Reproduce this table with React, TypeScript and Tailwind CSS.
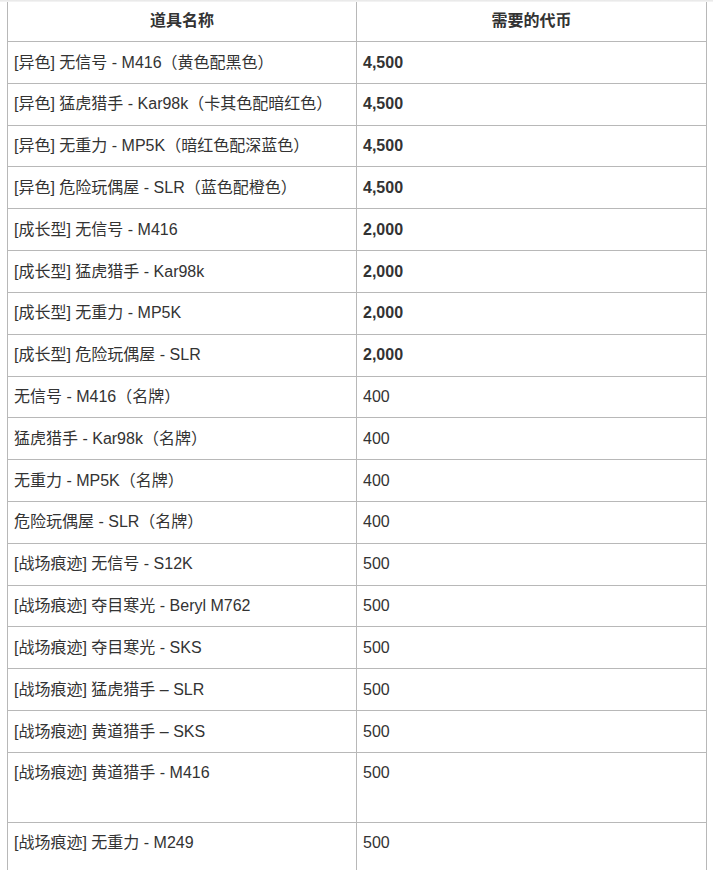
const rows: { name: string; cost: string; bold?: boolean; tall?: boolean; last?: boolean }[] = [
  { name: "[异色] 无信号 - M416（黄色配黑色）", cost: "4,500", bold: true },
  { name: "[异色] 猛虎猎手 - Kar98k（卡其色配暗红色）", cost: "4,500", bold: true },
  { name: "[异色] 无重力 - MP5K（暗红色配深蓝色）", cost: "4,500", bold: true },
  { name: "[异色] 危险玩偶屋 - SLR（蓝色配橙色）", cost: "4,500", bold: true },
  { name: "[成长型] 无信号 - M416", cost: "2,000", bold: true },
  { name: "[成长型] 猛虎猎手 - Kar98k", cost: "2,000", bold: true },
  { name: "[成长型] 无重力 - MP5K", cost: "2,000", bold: true },
  { name: "[成长型] 危险玩偶屋 - SLR", cost: "2,000", bold: true },
  { name: "无信号 - M416（名牌）", cost: "400" },
  { name: "猛虎猎手 - Kar98k（名牌）", cost: "400" },
  { name: "无重力 - MP5K（名牌）", cost: "400" },
  { name: "危险玩偶屋 - SLR（名牌）", cost: "400" },
  { name: "[战场痕迹] 无信号 - S12K", cost: "500" },
  { name: "[战场痕迹] 夺目寒光 - Beryl M762", cost: "500" },
  { name: "[战场痕迹] 夺目寒光 - SKS", cost: "500" },
  { name: "[战场痕迹] 猛虎猎手 – SLR", cost: "500" },
  { name: "[战场痕迹] 黄道猎手 – SKS", cost: "500" },
  { name: "[战场痕迹] 黄道猎手 - M416", cost: "500", tall: true },
  { name: "[战场痕迹] 无重力 - M249", cost: "500", last: true },
];

export default function App() {
  return (
    <div
      className="w-[713px] h-[870px] overflow-hidden bg-white text-[16px] leading-[22px] text-[#333]"
      style={{ fontFamily: '"Liberation Sans", Arial, "Noto Sans CJK SC", sans-serif' }}
    >
      <div className="h-[2px] bg-gradient-to-b from-[#e6e6e6] to-[#f6f6f6]" />
      <div className="ml-[7px] w-[700px] border-x border-[#b8b8b8]">
        {/* header */}
        <div className="grid grid-cols-[349px_349px] h-[40px] border-b border-[#b8b8b8] font-bold">
          <div className="border-r border-[#b8b8b8] text-center pt-[7.5px]">道具名称</div>
          <div className="text-center pt-[7.5px]">需要的代币</div>
        </div>

        {rows.map((r, i) => (
          <div
            key={i}
            className={`grid grid-cols-[349px_349px] border-b border-[#b8b8b8] ${
              r.tall ? "h-[70px]" : r.last ? "h-[80px]" : "h-[41.82px]"
            }`}
          >
            <div className="border-r border-[#b8b8b8] pl-[6px] pt-[9.5px] whitespace-nowrap">
              {r.name}
            </div>
            <div className={`pl-[6px] pt-[9.5px] ${r.bold ? "font-bold" : ""}`}>{r.cost}</div>
          </div>
        ))}
      </div>
    </div>
  );
}
